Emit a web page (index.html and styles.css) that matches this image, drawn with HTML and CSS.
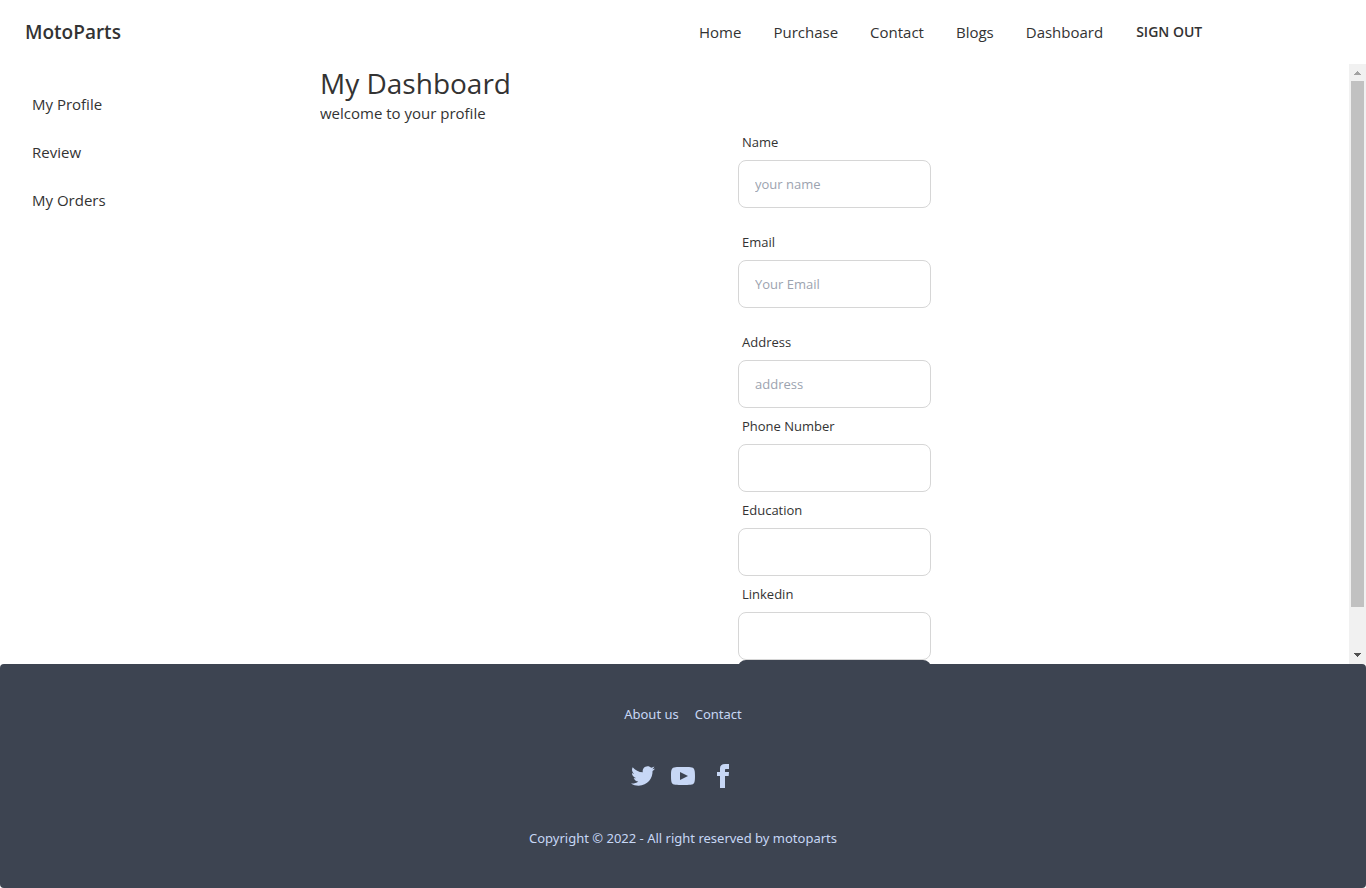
FILE: index.html
```html
<!DOCTYPE html>
<html lang="en">
<head>
<meta charset="utf-8">
<title>MotoParts</title>
<link rel="stylesheet" href="styles.css">
</head>
<body>
<header class="navbar">
  <div class="navbar-start"><a class="brand" href="#">MotoParts</a></div>
  <nav class="navbar-links">
    <a href="#">Home</a>
    <a href="#">Purchase</a>
    <a href="#">Contact</a>
    <a href="#">Blogs</a>
    <a href="#">Dashboard</a>
    <button class="sign-out" type="button">SIGN OUT</button>
  </nav>
</header>
<div class="drawer">
  <aside class="sidebar">
    <a href="#">My Profile</a>
    <a href="#">Review</a>
    <a href="#">My Orders</a>
  </aside>
  <main class="content">
    <h1>My Dashboard</h1>
    <p class="welcome">welcome to your profile</p>
    <form class="profile-form">
      <div class="field spaced"><label for="name">Name</label><input id="name" type="text" placeholder="your name"></div>
      <div class="field spaced"><label for="email">Email</label><input id="email" type="email" placeholder="Your Email"></div>
      <div class="field"><label for="address">Address</label><input id="address" type="text" placeholder="address"></div>
      <div class="field"><label for="phone">Phone Number</label><input id="phone" type="text"></div>
      <div class="field"><label for="education">Education</label><input id="education" type="text"></div>
      <div class="field"><label for="linkedin">Linkedin</label><input id="linkedin" type="text"></div>
      <button class="submit" type="submit" aria-label="Submit"></button>
    </form>
  </main>
  <div class="scrollbar" aria-hidden="true">
    <svg class="arrow" viewBox="0 0 17 17" shape-rendering="crispEdges"><path fill="#a3a3a3" d="M8 7h1v1h1v1h1v1h1v1H5v-1h1V9h1V8h1z"/></svg>
    <div class="track"><div class="thumb"></div></div>
    <svg class="arrow" viewBox="0 0 17 17" shape-rendering="crispEdges"><path fill="#505050" d="M5 6h7v1h-1v1h-1v1H9v1H8V9H7V8H6V7H5z"/></svg>
  </div>
</div>
<footer class="footer">
  <nav class="footer-links"><a href="#">About us</a><a href="#">Contact</a></nav>
  <div class="social">
    <a href="#" aria-label="Twitter"><svg viewBox="0 0 24 24"><path d="M24 4.557c-.883.392-1.832.656-2.828.775 1.017-.609 1.798-1.574 2.165-2.724-.951.564-2.005.974-3.127 1.195-.897-.957-2.178-1.555-3.594-1.555-3.179 0-5.515 2.966-4.797 6.045-4.091-.205-7.719-2.165-10.148-5.144-1.29 2.213-.669 5.108 1.523 6.574-.806-.026-1.566-.247-2.229-.616-.054 2.281 1.581 4.415 3.949 4.89-.693.188-1.452.232-2.224.084.626 1.956 2.444 3.379 4.6 3.419-2.07 1.623-4.678 2.348-7.29 2.04 2.179 1.397 4.768 2.212 7.548 2.212 9.142 0 14.307-7.721 13.995-14.646.962-.695 1.797-1.562 2.457-2.549z"/></svg></a>
    <a href="#" aria-label="YouTube"><svg viewBox="0 0 24 24"><path d="M19.615 3.184c-3.604-.246-11.631-.245-15.23 0-3.897.266-4.356 2.62-4.385 8.816.029 6.185.484 8.549 4.385 8.816 3.6.245 11.626.246 15.23 0 3.897-.266 4.356-2.62 4.385-8.816-.029-6.185-.484-8.549-4.385-8.816zm-10.615 12.816v-8l8 3.993-8 4.007z"/></svg></a>
    <a href="#" aria-label="Facebook"><svg viewBox="0 0 24 24"><path d="M9 8h-3v4h3v12h5v-12h3.642l.358-4h-4v-1.667c0-.955.192-1.333 1.115-1.333h2.885v-5h-3.808c-3.596 0-5.192 1.583-5.192 4.615v3.385z"/></svg></a>
  </div>
  <p>Copyright © 2022 - All right reserved by motoparts</p>
</footer>
</body>
</html>
```
FILE: styles.css
```css
* { box-sizing: border-box; }
body {
  margin: 0;
  height: 100vh;
  display: flex;
  flex-direction: column;
  background: #fff;
  color: #333;
  font: 15px/24px "Open Sans", "Noto Sans", sans-serif;
}
a { color: inherit; text-decoration: none; }
h1, p { margin: 0; }
.navbar {
  flex: none;
  min-height: 64px;
  padding: 0 8px;
  display: flex;
  align-items: center;
}
.navbar-start { width: 50%; }
.brand { padding: 0 17px; font-size: 19px; font-weight: 600; }
.navbar-links { display: flex; align-items: center; }
.navbar-links a { padding: 12px 16px; }
.sign-out {
  height: 48px;
  padding: 0 16px;
  border: 1px solid transparent;
  background: transparent;
  color: inherit;
  font: 600 14px/14px "Open Sans", "Noto Sans", sans-serif;
}
.drawer { flex: 1; min-height: 0; display: flex; }
.sidebar { width: 320px; padding: 16px; display: flex; flex-direction: column; }
.sidebar a { padding: 12px 16px; }
.content { flex: 1; overflow: hidden; }
h1 { font-size: 28px; line-height: 38px; font-weight: 400; }
.welcome { line-height: 22px; }
.profile-form { width: 193px; margin: 0 auto; }
.field { display: flex; flex-direction: column; }
.spaced { margin-bottom: 16px; }
.field label { padding: 8px 4px; font-size: 13px; line-height: 20px; }
.field input {
  width: 100%;
  height: 48px;
  padding: 0 16px;
  border: 1px solid #d6d6d6;
  border-radius: 8px;
  background: #fff;
  color: inherit;
  font: 13px/20px "Open Sans", "Noto Sans", sans-serif;
}
.field input::placeholder { color: #9ca3af; opacity: 1; }
.submit {
  display: block;
  width: 100%;
  height: 48px;
  border: 0;
  border-radius: 8px;
  background: #3d4451;
}
.scrollbar { width: 17px; display: flex; flex-direction: column; background: #f1f1f1; }
.arrow { flex: none; width: 17px; height: 17px; }
.track { flex: 1; padding: 0 2px; }
.thumb { height: 93%; background: #c1c1c1; }
.footer {
  flex: none;
  padding: 40px;
  display: grid;
  gap: 40px;
  justify-items: center;
  border-radius: 4px;
  background: #3d4451;
  color: #c7d7f5;
  font: 13px/20px "Noto Sans", "Open Sans", sans-serif;
}
.footer-links, .social { display: flex; gap: 16px; }
.social svg { display: block; width: 24px; height: 24px; fill: currentColor; }
```
